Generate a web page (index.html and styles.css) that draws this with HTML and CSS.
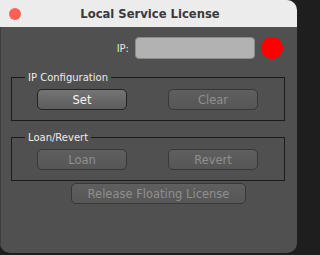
FILE: index.html
```html
<!DOCTYPE html>
<html>
<head>
<meta charset="utf-8">
<link rel="stylesheet" href="styles.css">
</head>
<body>
<div class="window">
  <div class="titlebar">
    <span class="close"></span>
    <span class="title">Local Service License</span>
    <span></span>
  </div>
  <div class="content">
    <div class="ip-row">
      <span class="ip-label">IP:</span>
      <span class="ip-field"></span>
      <span class="status"></span>
    </div>
    <fieldset class="group">
      <legend>IP Configuration</legend>
      <div class="btn-row">
        <button class="btn default">Set</button>
        <button class="btn disabled">Clear</button>
      </div>
    </fieldset>
    <fieldset class="group group2">
      <legend>Loan/Revert</legend>
      <div class="btn-row">
        <button class="btn disabled">Loan</button>
        <button class="btn disabled">Revert</button>
      </div>
    </fieldset>
    <button class="btn disabled release">Release Floating License</button>
  </div>
</div>
</body>
</html>
```

FILE: styles.css
```css
html, body {
  margin: 0;
  padding: 0;
  background: #1e1e1e;
}
body {
  width: 300px;
  height: 255px;
  overflow: hidden;
  font-family: "DejaVu Sans", "Liberation Sans", sans-serif;
}
.window {
  width: 297px;
  height: 253px;
  background: #505050;
  border-radius: 0 10px 10px 10px;
  overflow: hidden;
  display: flex;
  flex-direction: column;
}
.titlebar {
  height: 27px;
  flex: none;
  background: #ececec;
  display: grid;
  grid-template-columns: 1fr auto 1fr;
  align-items: center;
}
.close {
  width: 12px;
  height: 12px;
  border-radius: 50%;
  background: #fe5f57;
  margin-left: 9px;
}
.title {
  font-weight: bold;
  font-size: 11.6px;
  color: #3a3a3a;
  padding-left: 3px;
}
.content {
  flex: 1;
  padding: 0 12px 0 11px;
  box-shadow: inset 1px 0 0 #3e3e3e;
}
.ip-row {
  margin-top: 10px;
  height: 22px;
  display: flex;
  justify-content: flex-end;
  align-items: center;
  gap: 6px;
  padding-right: 2px;
}
.ip-label {
  font-size: 10px;
  color: #e6e6e6;
}
.ip-field {
  width: 120px;
  height: 22px;
  box-sizing: border-box;
  background: #b2b2b2;
  border: 1px solid #8c8c8c;
  border-radius: 4px;
}
.status {
  width: 22px;
  height: 22px;
  border-radius: 50%;
  background: #ff0000;
}
.group {
  margin: 12px 0 0 0;
  border: 1px solid #1c1c1c;
  padding: 5px 0 10px 0;
  min-width: 0;
}
.group2 {
  margin-top: 10px;
}
.group legend {
  margin-left: 13px;
  padding: 0 3px;
  font-size: 10px;
  line-height: 13px;
  color: #ececec;
}
.btn-row {
  display: flex;
  justify-content: space-between;
  padding: 0 26px 0 25px;
}
.btn {
  width: 90px;
  height: 21px;
  box-sizing: border-box;
  border-radius: 5px;
  border: 1px solid #2e2e2e;
  font-family: "DejaVu Sans", "Liberation Sans", sans-serif;
  font-size: 11.5px;
  padding: 0;
  margin: 0;
}
.default {
  background: linear-gradient(#747474, #5c5c5c);
  color: #f4f4f4;
  border-color: #232323;
}
.disabled {
  background: linear-gradient(#5f5f5f, #565656);
  color: #8f8f8f;
  border-color: #383838;
}
.release {
  display: block;
  width: 175px;
  margin: 2px 0 0 60px;
}
```
